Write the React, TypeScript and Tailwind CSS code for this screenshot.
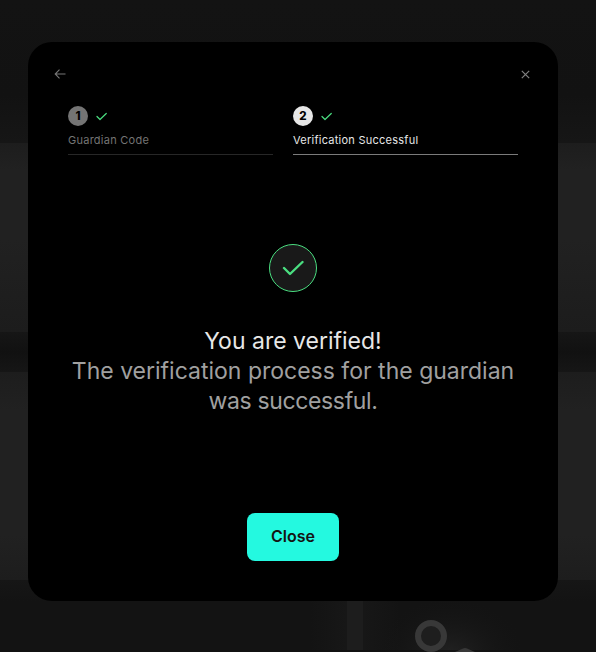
import React from "react";

function Check({ className, width }: { className: string; width: number }) {
  return (
    <svg viewBox="0 0 22 16" fill="none" stroke="#4ade80" strokeWidth={width} strokeLinecap="round" strokeLinejoin="round" className={className}>
      <path d="M2 8 8 14 20.5 2" />
    </svg>
  );
}

function Step({ number, label, active }: { number: number; label: string; active?: boolean }) {
  return (
    <div className={active ? "w-[225px] h-[49px] border-b border-[#7b7b7b]" : "w-[205px] h-[49px] border-b border-[#272727]"}>
      <div className="flex h-5 items-center gap-2">
        <span className={`flex size-5 items-center justify-center rounded-full text-[11.5px] font-extrabold leading-5 text-black ${active ? "bg-[#e7e7e7]" : "bg-[#747474]"}`}>
          {number}
        </span>
        <Check className="h-[9px] w-[11px]" width={2.4} />
      </div>
      <p className={`mt-[6px] text-[11px] leading-4 tracking-[0.25px] whitespace-nowrap ${active ? "text-[#e7e7e7]" : "text-[#747474]"}`}>{label}</p>
    </div>
  );
}

function Backdrop() {
  return (
    <svg className="absolute inset-0" width="596" height="652" aria-hidden="true">
      <defs>
        <radialGradient id="glow">
          <stop offset="0" stopColor="#262626" stopOpacity=".8" />
          <stop offset="1" stopColor="#141414" stopOpacity="0" />
        </radialGradient>
        <linearGradient id="column" x1="0" x2="1">
          <stop offset="0" stopColor="#181818" stopOpacity="0" />
          <stop offset=".5" stopColor="#181818" />
          <stop offset="1" stopColor="#181818" stopOpacity="0" />
        </linearGradient>
      </defs>
      <rect x="310" y="601" width="90" height="49" fill="url(#column)" />
      <rect x="347" y="601" width="16" height="49" fill="#1d1d1d" />
      <ellipse cx="450" cy="655" rx="75" ry="58" fill="url(#glow)" />
      <rect y="650" width="596" height="2" fill="#111111" fillOpacity=".7" />
      <circle cx="431" cy="636" r="13" fill="#1e1e1e" stroke="#383838" strokeWidth="6" />
      <path d="M455 652 463 648.4Q465 647.6 467 648.4L475 652Z" fill="#383838" />
    </svg>
  );
}

export default function App() {
  return (
    <main className="relative h-[652px] w-[596px] overflow-hidden bg-[linear-gradient(to_bottom,#131313_0px,#121212_95px,#161616_143px,#1d1d1d_143px,#212121_170px,#212121_240px,#1c1c1c_332px,#161616_332px,#111111_352px,#161616_372px,#1d1d1d_372px,#212121_410px,#212121_535px,#1d1d1d_580px,#161616_580px,#131313_601px,#131313_652px)] pt-[42px] pl-7 font-['Inter','Liberation_Sans',sans-serif]">
      <Backdrop />
      <section className="relative flex h-[559px] w-[530px] flex-col rounded-[24px] bg-black pt-6">
        <header className="flex h-4 items-center justify-between pr-7 pl-[26px]">
          <button aria-label="Back">
            <svg className="block" width="12" height="10" viewBox="0 0 12 10" fill="none" stroke="#777" strokeWidth="1.1">
              <path d="M11.5 5H1.2M5.5.7 1.2 5l4.3 4.3" />
            </svg>
          </button>
          <button aria-label="Dismiss">
            <svg className="block" width="9" height="9" viewBox="0 0 9 9" fill="none" stroke="#808080" strokeWidth="1.2">
              <path d="m.8.8 7.4 7.4m0-7.4L.8 8.2" />
            </svg>
          </button>
        </header>
        <div className="mt-6 flex gap-5 pl-10">
          <Step number={1} label="Guardian Code" />
          <Step number={2} label="Verification Successful" active />
        </div>
        <div className="mt-[89px] flex size-12 items-center justify-center self-center rounded-full border border-[#4ade80] bg-[#191919]">
          <Check className="h-4 w-[22px]" width={2.4} />
        </div>
        <h1 className="mt-[34px] text-center text-[23px] leading-[30px] font-normal text-[#e7e7e7]">
          <span className="block">You are verified!</span>
          <span className="block text-[#a0a0a0]">
            The verification process for the guardian
            <span className="block tracking-[-0.35px]">was successful.</span>
          </span>
        </h1>
        <button className="mt-[97px] h-12 w-[92px] self-center rounded-lg bg-[#24f9e0] pb-0.5 text-[16px] leading-6 font-semibold text-[#141414]">Close</button>
      </section>
    </main>
  );
}
